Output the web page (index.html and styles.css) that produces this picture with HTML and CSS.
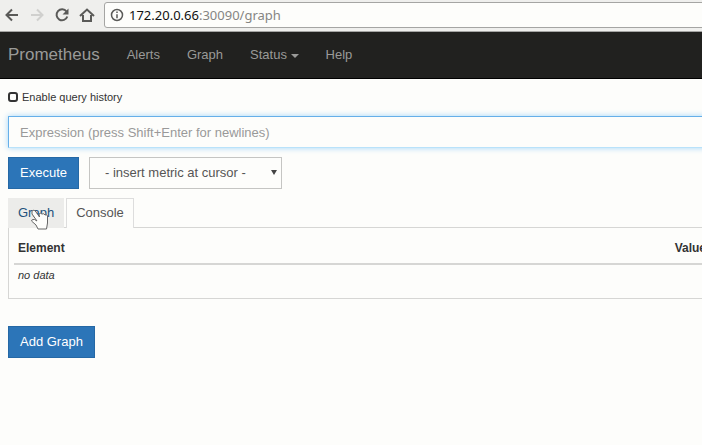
FILE: index.html
```html
<!DOCTYPE html>
<html lang="en">
<head>
<meta charset="utf-8">
<title>Prometheus</title>
<link rel="stylesheet" href="styles.css">
</head>
<body>
<header class="toolbar">
  <button class="tool" type="button" aria-label="Back"><svg viewBox="0 0 16 16"><path d="M14 8H2.500M8 2.500 2.500 8 8 13.500"/></svg></button>
  <button class="tool disabled" type="button" aria-label="Forward" disabled><svg viewBox="0 0 16 16"><path d="M2 8h11.500M8 2.500 13.500 8 8 13.500"/></svg></button>
  <button class="tool" type="button" aria-label="Reload"><svg viewBox="0 0 16 16"><path d="M12.500 4.500A5.500 5.500 0 1 0 13.300 9.500"/><path class="solid" d="M14.500 1.500V7.500H8.500Z"/></svg></button>
  <button class="tool" type="button" aria-label="Home"><svg viewBox="0 0 16 16"><path d="M1 9 8 2.500 15 9M4 8v6h8V8"/></svg></button>
  <a class="address" href="#">
    <svg viewBox="0 0 14 14"><circle cx="7" cy="7" r="5.500"/><path d="M7 6.300v4M7 3.500v1.500"/></svg>
    <span><span class="host">172.20.0.66</span>:30090/graph</span>
  </a>
</header>
<nav class="navbar">
  <a class="brand" href="#">Prometheus</a>
  <a href="#">Alerts</a>
  <a href="#">Graph</a>
  <a href="#">Status <span class="caret"></span></a>
  <a href="#">Help</a>
</nav>
<main class="page">
  <label class="history"><input type="checkbox">Enable query history</label>
  <input class="expression" type="text" aria-label="Expression" placeholder="Expression (press Shift+Enter for newlines)">
  <div class="actions">
    <button class="primary" type="button">Execute</button>
    <div class="picker">
      <select aria-label="Metric"><option>- insert metric at cursor -</option></select>
      <svg viewBox="0 0 6 5"><path d="M0 0h6L3 5Z"/></svg>
    </div>
  </div>
  <div class="tabs">
    <a class="tab hovered" href="#">Graph<svg class="pointer" viewBox="0 0 20 22"><path d="M2 2C3.500 .5 5 1.500 6 3l3.500 5-.5-3q1.500-1.500 3 0 2-1 3 1 2-1 2.500 1v7l-1 6H8l-2-4-4.500-4q0-2 3-1.500l2.500 1.500-5-7Z"/></svg></a>
    <a class="tab active" href="#">Console</a>
  </div>
  <section class="panel">
    <table>
      <thead><tr><th>Element</th><th class="value">Value</th></tr></thead>
      <tbody><tr><td colspan="2">no data</td></tr></tbody>
    </table>
  </section>
  <button class="primary add" type="button">Add Graph</button>
</main>
</body>
</html>
```
FILE: styles.css
```css
* { box-sizing: border-box; }
body {
  margin: 0;
  min-height: 100vh;
  overflow: hidden;
  background: #fdfdfb;
  color: #333;
  font: 13px/18px "Liberation Sans", Arial, sans-serif;
}
a { text-decoration: none; }
button, input, select { margin: 0; font: inherit; }

.toolbar {
  display: flex;
  align-items: center;
  gap: 9px;
  height: 32px;
  padding: 0 0 2px 4px;
  background: #efefed;
  border-bottom: 1px solid #a5a5a3;
}
.tool { display: flex; padding: 0; border: 0; background: none; }
.tool svg { width: 16px; height: 16px; }
.toolbar svg { fill: none; stroke: #5a5a58; stroke-width: 2; }
.toolbar .disabled svg { stroke: #d0d0ce; }
.toolbar .solid { fill: #5a5a58; stroke: none; }
.address {
  display: flex;
  flex: 1;
  align-items: center;
  gap: 5px;
  height: 26px;
  margin-right: -8px;
  padding-left: 5px;
  border: 1px solid #a5a5a3;
  border-radius: 3px;
  background: #fdfdfb;
  color: #858583;
  font: 13px/18px "Noto Sans", sans-serif;
}
.toolbar .address svg { width: 14px; height: 14px; stroke-width: 1.500; }
.host { color: #111; }

.navbar {
  display: flex;
  align-items: center;
  gap: 27px;
  height: 47px;
  padding-left: 8px;
  background: #21211f;
  border-bottom: 1px solid #000;
}
.navbar a { color: #9a9a98; }
.navbar .brand { font-size: 17px; }
.caret {
  display: inline-block;
  vertical-align: middle;
  border: 4px solid transparent;
  border-top-color: currentColor;
  border-bottom: 0;
}

.page { margin-right: -22px; padding: 9px 8px; }
.history { display: flex; align-items: center; gap: 4px; width: max-content; font-size: 11px; }
.history input {
  width: 10px;
  height: 10px;
  appearance: none;
  border: 2px solid #333;
  border-radius: 3px;
}
.expression {
  display: block;
  width: 100%;
  height: 32px;
  margin-top: 10px;
  padding: 0 11px;
  border: 1px solid #66afe9;
  border-bottom-color: #b9e2fa;
  background: #fdfdfb;
  box-shadow: 0 0 6px #a3d5f7;
  outline: 0;
}
.expression::placeholder { color: #999; opacity: 1; }
.actions { display: flex; gap: 10px; margin: 9px 0; }
.primary {
  height: 32px;
  padding: 0 11px;
  border: 1px solid #2568a5;
  background: #2c75b8;
  color: #fff;
}
.picker { position: relative; }
.picker select {
  height: 32px;
  padding: 0 35px 0 15px;
  appearance: none;
  border: 1px solid #c5c5c3;
  border-radius: 0;
  background: #fdfdfb;
  color: #555;
}
.picker svg { position: absolute; top: 13px; right: 5px; width: 6px; height: 5px; fill: #444; pointer-events: none; }

.tabs { display: flex; gap: 2px; }
.tab {
  position: relative;
  height: 30px;
  padding: 5px 9px;
  border: 1px solid transparent;
  border-bottom: 0;
  color: #555;
}
.hovered { border-color: #ececea; background: #ececea; color: #23527c; }
.active { z-index: 1; border-color: #ddd; background: #fdfdfb; }
.pointer {
  position: absolute;
  z-index: 2;
  top: 10px;
  left: 21px;
  width: 20px;
  height: 22px;
  fill: #fdfdfb;
  stroke: #666;
}
.panel {
  margin-top: -1px;
  padding: 5px 5px 13px;
  border: 1px solid #d6d6d4;
}
table { width: 100%; border-collapse: collapse; font-size: 12px; }
th, td { padding: 4px; text-align: left; }
th { height: 31px; border-bottom: 2px solid #d6d6d4; }
td { padding: 1px 4px; font-size: 11px; font-style: italic; }
.value { width: 36px; }
.add { margin-top: 27px; }
```
